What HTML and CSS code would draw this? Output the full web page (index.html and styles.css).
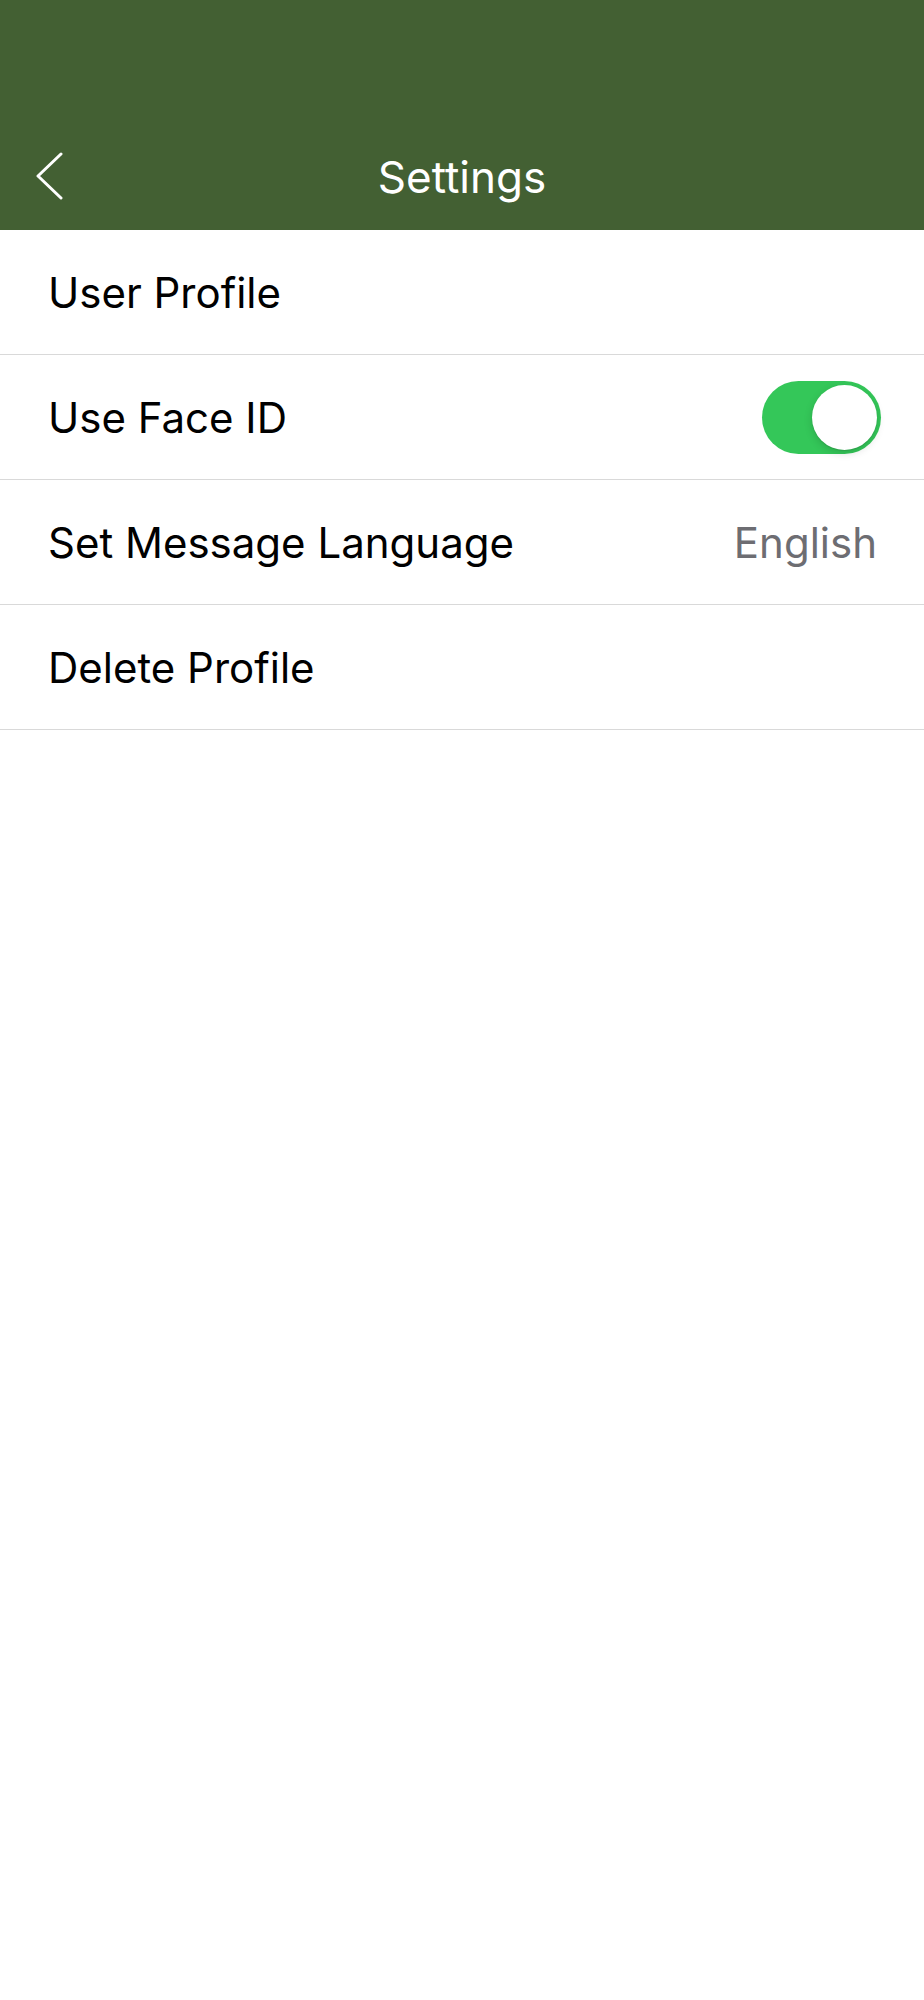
FILE: index.html
```html
<!DOCTYPE html>
<html lang="en">
<head>
<meta charset="UTF-8">
<meta name="viewport" content="width=device-width, initial-scale=1.0">
<title>Settings</title>
<link rel="stylesheet" href="styles.css">
</head>
<body>

<div class="header">
    <div class="navbar">
        <button class="backButton" aria-label="Back">
            <svg width="28" height="50" viewBox="0 0 28 50">
                <polyline points="25,2 2,24 25,46" fill="none" stroke="#ffffff" stroke-width="3" stroke-linecap="round" stroke-linejoin="round"/>
            </svg>
        </button>
        <h1>Settings</h1>
    </div>
</div>

<ul class="settingsList">
    <li class="row">User Profile</li>
    <li class="row">
        <span>Use Face ID</span>
        <span class="toggle on"><span class="knob"></span></span>
    </li>
    <li class="row">
        <span>Set Message Language</span>
        <span class="value">English</span>
    </li>
    <li class="row">Delete Profile</li>
</ul>

</body>
</html>
```

FILE: styles.css
```css
body {
    font-family: 'Inter', 'Roboto', sans-serif;
    margin: 0;
    padding: 0;
    background-color: #ffffff;
    color: #000;
}
.header {
    background-color: #436033;
    height: 230px;
    padding-top: 124px;
    box-sizing: border-box;
}
.navbar {
    position: relative;
    height: 106px;
    display: flex;
    align-items: center;
    justify-content: center;
}
.navbar h1 {
    margin: 0;
    color: white;
    font-size: 44px;
    font-weight: 400;
}
.backButton {
    position: absolute; /* sits over the bar, left of the centred title */
    left: 36px;
    top: 28px;
    background: none;
    border: none;
    padding: 0;
    cursor: pointer;
}
.backButton svg {
    display: block;
}
.settingsList {
    list-style: none;
    margin: 0;
    padding: 0;
}
.row {
    height: 124px;
    border-bottom: 1px solid #d9d9d9;
    display: flex;
    align-items: center;
    justify-content: space-between;
    padding: 0 43px 0 48px;
    font-size: 42px;
}
.value {
    color: #6d6d72;
    margin-right: 4px;
}
.toggle {
    width: 119px;
    height: 73px;
    border-radius: 37px;
    background-color: #e9e9eb;
    display: flex;
    align-items: center;
    padding: 0 4px;
    box-sizing: border-box;
}
.toggle.on {
    background-color: #34c759;
    justify-content: flex-end;
}
.knob {
    width: 65px;
    height: 65px;
    border-radius: 50%;
    background: white;
    box-shadow: 0 3px 8px rgba(0, 0, 0, 0.15), 0 1px 1px rgba(0, 0, 0, 0.1);
}
```
